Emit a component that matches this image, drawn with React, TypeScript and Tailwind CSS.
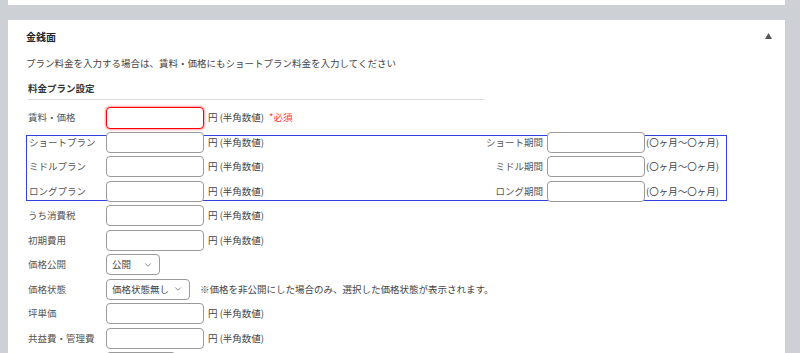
import { ChevronDown } from "lucide-react";

const FONT = { fontFamily: '"Noto Sans CJK JP", "Noto Sans", sans-serif' };

function TextInput({ invalid = false, w = "w-[98px]" }: { invalid?: boolean; w?: string }) {
  return (
    <div
      className={
        invalid
          ? `${w} h-[22px] shrink-0 rounded-[4px] border border-[#f00] bg-white shadow-[0_0_2px_1px_rgba(255,80,80,0.55)]`
          : `${w} h-[21px] shrink-0 rounded-[4px] border border-[#9a9a9a] bg-white`
      }
    />
  );
}

function Unit({ children }: { children: React.ReactNode }) {
  return <span className="ml-[4px] leading-[21px] text-[#444]">{children}</span>;
}

function Row({
  label,
  children,
  inBox = false,
}: {
  label: string;
  children: React.ReactNode;
  inBox?: boolean;
}) {
  return (
    <div className="flex h-[24.5px] items-start">
      <div className={`${inBox ? "w-[79px] pl-[2px]" : "w-[78px]"} shrink-0 leading-[21px] text-[#555]`}>
        {label}
      </div>
      {children}
    </div>
  );
}

function Select({ value, w }: { value: string; w: string }) {
  return (
    <div className={`${w} flex h-[21px] shrink-0 items-center justify-between rounded-[4px] border border-[#9a9a9a] bg-white pl-[5px] pr-[6px] text-[#444]`}>
      <span>{value}</span>
      <ChevronDown size={10} strokeWidth={1.6} className="text-[#555]" />
    </div>
  );
}

// 料金プラン（ショート/ミドル/ロング）
const PLANS = [
  { plan: "ショートプラン", period: "ショート期間" },
  { plan: "ミドルプラン", period: "ミドル期間" },
  { plan: "ロングプラン", period: "ロング期間" },
];

export default function App() {
  return (
    <div className="h-[353px] overflow-hidden bg-[#cdd0d4] pl-2 pr-[15px] text-[9.5px]" style={FONT}>
      <div className="h-[5px] bg-white" />
      <div className="mt-[15px] h-[400px] bg-white">
        {/* タイトル */}
        <div className="flex h-[32px] items-center justify-between pl-[18px] pr-[13px]">
          <h2 className="text-[10px] font-bold text-[#23282d]">金銭面</h2>
          <svg width="7" height="6" viewBox="0 0 7 6">
            <polygon points="3.5,0 7,6 0,6" fill="#555" />
          </svg>
        </div>

        <div className="pl-[18px]">
          <p className="mt-[4px] h-[14px] leading-[14px] text-[#444]">
            プラン料金を入力する場合は、賃料・価格にもショートプラン料金を入力してください
          </p>

          <div className="mt-[11px] ml-[2px] w-[457px] border-b border-[#dcdcde] pb-[4px]">
            <h3 className="h-[14px] font-bold leading-[14px] text-[#333]">料金プラン設定</h3>
          </div>

          <div className="mt-[7px] pl-[2px]">
            <Row label="賃料・価格">
              <TextInput invalid />
              <Unit>円 (半角数値)</Unit>
              <span className="ml-[5px] leading-[21px] text-[#f33]">*必須</span>
            </Row>
          </div>

          {/* プラン料金 */}
          <div className="mt-[3.5px] mb-[4px] w-[701px] border border-[#2f3fe0]">
            <div className="-mt-[4.5px] -mb-[5px]">
              {PLANS.map((p) => (
                <div key={p.plan} className="flex">
                  <div className="w-[458px] shrink-0">
                    <Row label={p.plan} inBox>
                      <TextInput />
                      <Unit>円 (半角数値)</Unit>
                    </Row>
                  </div>
                  <div className="flex h-[24.5px] items-start">
                    <div className="w-[58px] text-right leading-[21px] text-[#555]">{p.period}</div>
                    <div className="ml-[4px]">
                      <TextInput />
                    </div>
                    <span className="ml-[1px] leading-[21px] text-[#444]">(〇ヶ月〜〇ヶ月)</span>
                  </div>
                </div>
              ))}
            </div>
          </div>

          <div className="pl-[2px]">
            <Row label="うち消費税">
              <TextInput />
              <Unit>円 (半角数値)</Unit>
            </Row>
            <Row label="初期費用">
              <TextInput />
              <Unit>円 (半角数値)</Unit>
            </Row>
            <Row label="価格公開">
              <Select value="公開" w="w-[54px]" />
            </Row>
            <Row label="価格状態">
              <Select value="価格状態無し" w="w-[84px]" />
              <span className="ml-[10px] leading-[21px] text-[#444]">
                ※価格を非公開にした場合のみ、選択した価格状態が表示されます。
              </span>
            </Row>
            <Row label="坪単価">
              <TextInput />
              <Unit>円 (半角数値)</Unit>
            </Row>
            <Row label="共益費・管理費">
              <TextInput />
              <Unit>円 (半角数値)</Unit>
            </Row>
            <Row label="">
              <TextInput w="w-[70px]" />
            </Row>
          </div>
        </div>
      </div>
    </div>
  );
}
